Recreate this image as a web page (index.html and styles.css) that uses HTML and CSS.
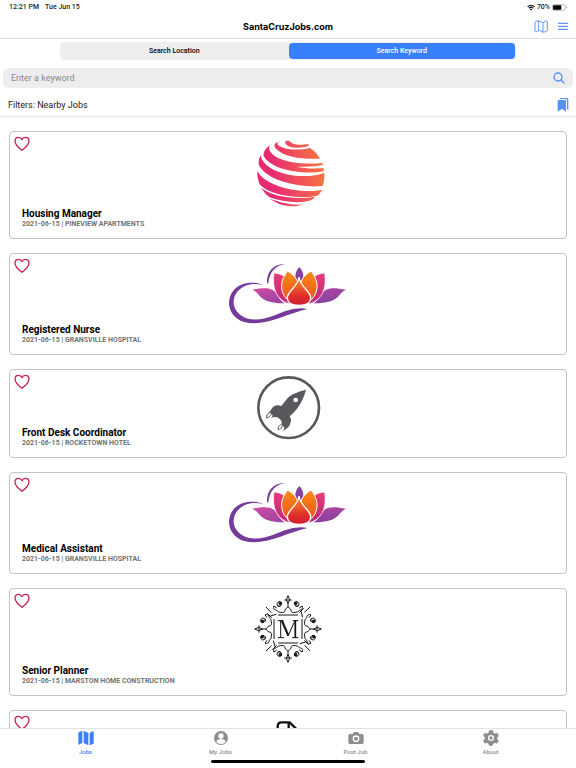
FILE: index.html
```html
<!DOCTYPE html>
<html lang="en">
<head>
<meta charset="utf-8">
<meta name="viewport" content="width=device-width, initial-scale=1">
<title>SantaCruzJobs.com</title>
<link rel="stylesheet" href="styles.css">
</head>
<body>
<svg class="defs" aria-hidden="true">
  <defs>
    <linearGradient id="globeFill" gradientUnits="userSpaceOnUse" x1="52" y1="145" x2="254" y2="110">
      <stop offset="0.2" stop-color="#e62a74"/><stop offset="1" stop-color="#f8763f"/>
    </linearGradient>
    <linearGradient id="leaf" x1="0" y1="0" x2="1" y2="1">
      <stop offset="0" stop-color="#cf4aa6"/><stop offset="1" stop-color="#7d3f9c"/>
    </linearGradient>
    <linearGradient id="pink" x1="0" y1="0" x2="0" y2="1">
      <stop offset="0" stop-color="#ea3a78"/><stop offset="1" stop-color="#bb2a78"/>
    </linearGradient>
    <linearGradient id="orange" x1="0" y1="0" x2="0" y2="1">
      <stop offset="0" stop-color="#fb8c10"/><stop offset="1" stop-color="#ee4b25"/>
    </linearGradient>
    <linearGradient id="core" x1="0" y1="0" x2="0" y2="1">
      <stop offset="0" stop-color="#f9902a"/><stop offset="0.7" stop-color="#df2b2c"/><stop offset="1" stop-color="#cf2034"/>
    </linearGradient>
    <symbol id="heart" viewBox="0 0 48 48">
      <path d="M24 43C12 34 3 26 3 15 3 8 8 4 14 4c4 0 8 2 10 7 2-5 6-7 10-7 6 0 11 4 11 11 0 11-9 19-21 28z" fill="none" stroke="#c0274e" stroke-width="4" stroke-linejoin="round"/>
    </symbol>
    <symbol id="lotus" viewBox="18 21 372 189">
      <path d="M130 91C104 77 62 81 42 104c-28 32-16 83 30 97 60 16 120-22 190-39-28-7-62 4-94 17-38 16-76 21-101 5-30-19-34-52-13-76 18-20 48-26 76-17z" fill="#763b9a"/>
      <path d="M142 86c-5-31 18-63 54-58-28 1-48 23-51 57z" fill="#763b9a"/>
      <path d="M97 104c34-6 60-9 73 13 8 14 14 22 25 28-33 1-63-5-78-24-6-8-12-13-20-17zM378 104c-34-6-60-9-73 13-8 14-14 22-25 28 33 1 63-5 78-24 6-8 12-13 20-17z" fill="url(#leaf)"/>
      <path d="M238 36c11 11 15 26 9 42h-18c-6-16-2-31 9-42z" fill="#8542a0"/>
      <g fill="url(#pink)" stroke="#fff" stroke-width="2">
        <path d="M162 54c24 2 40 13 44 34l4 59c-38-10-55-43-48-93zM314 54c-24 2-40 13-44 34l-4 59c38-10 55-43 48-93z"/>
      </g>
      <g fill="url(#orange)" stroke="#fff" stroke-width="3">
        <path d="M202 48c26 14 37 35 34 60l-5 41c-34-9-48-34-46-61 1-15 9-27 17-40zM274 48c-26 14-37 35-34 60l5 41c34-9 48-34 46-61-1-15-9-27-17-40z"/>
      </g>
      <path d="M237 66c3 30 35 42 35 62 0 15-15 23-35 23s-35-8-35-23c0-20 32-32 35-62z" fill="url(#core)" stroke="#fff" stroke-width="4"/>
    </symbol>
  </defs>
</svg>

<header class="top">
  <div class="status">
    <span class="status-group"><span>12:21 PM</span><span>Tue Jun 15</span></span>
    <span class="status-group tight">
      <svg width="8" height="7" viewBox="0 0 24 20" aria-hidden="true"><path d="M2 8c6-6 14-6 20 0M6 12c4-4 8-4 12 0" fill="none" stroke="#111" stroke-width="4"/><path d="M12 19l-4-4c2-2 6-2 8 0z" fill="#111"/></svg>
      <span>70%</span>
      <svg width="15" height="7" viewBox="0 0 45 21" aria-hidden="true"><rect x="1" y="2" width="39" height="17" rx="5" fill="#fff" stroke="#999" stroke-width="2"/><rect x="3" y="4" width="25" height="13" rx="3" fill="#000"/><path d="M42 7c3 1 3 6 0 7z" fill="#999"/></svg>
    </span>
  </div>
  <div class="titlebar">
    <h1>SantaCruzJobs.com</h1>
    <div class="actions">
      <button class="icon" aria-label="Map"><svg width="14" height="13" viewBox="0 0 42 39" fill="none" stroke="#6099fb" stroke-width="3" stroke-linejoin="round"><path d="M3 8c0-2 1-3 3-4l7-2 14 6 9-5c2-1 4 0 4 2v25c0 2-1 3-3 4l-8 3-13-6-9 4c-2 1-4 0-4-2zM14 3v27M27 9v27"/></svg></button>
      <button class="icon" aria-label="Menu"><svg width="10" height="9" viewBox="0 0 30 27" stroke="#6099fb" stroke-width="4"><path d="M0 4h30M0 13h30M0 22h30"/></svg></button>
    </div>
  </div>
</header>

<section class="search" aria-label="Search">
  <div class="segment">
    <button>Search Location</button>
    <button class="on">Search Keyword</button>
  </div>
  <div class="field">
    <input type="text" placeholder="Enter a keyword" aria-label="Keyword">
    <button class="icon" aria-label="Search"><svg width="12" height="12" viewBox="0 0 36 36" fill="none" stroke="#5592fb" stroke-width="4" stroke-linecap="round"><circle cx="15" cy="15" r="12"/><path d="M24 24l9 9"/></svg></button>
  </div>
  <div class="filters">
    <span>Filters: Nearby Jobs</span>
    <button class="icon" aria-label="Saved jobs"><svg width="12" height="14" viewBox="0 0 36 42" fill="#5592fb"><path d="M2 9c0-2 1-3 3-3h19c2 0 3 1 3 3v32l-12-9-13 9z"/><path d="M8 3c0-2 2-3 4-3h17c3 0 5 2 5 5v31l-4-3V9c0-4-2-6-6-6z"/></svg></button>
  </div>
</section>

<main class="jobs">
  <article class="card">
    <button class="like" aria-label="Save Housing Manager"><svg width="16" height="16"><use href="#heart"/></svg></button>
    <div class="art tall">
      <svg width="74" height="70" viewBox="33 24 222 210" aria-hidden="true">
        <g fill="url(#globeFill)">
          <path d="M137 33c-6 12 12 20 32 20 14 0 28-2 34-4 4-2 4-4 1-7-18 4-45 4-57-10z"/>
          <path d="M122 33c-16 4-24 12-14 23 24 25 76 32 132 30-5-11-15-22-30-32-34 8-79 6-95-8-5-5-3-10 7-13z"/>
          <path d="M90 46C76 56 69 67 71 78c16 30 65 44 109 48 28 3 50 2 71-2v-10c-22 2-56 2-82-4 27 0 56 0 80-5l-2-6c-60 6-131-3-153-30-7-8-9-15-4-23z"/>
          <path d="M62 76c-6 9-7 21-5 30 18 34 68 52 123 60 26 4 48 4 68 2 4-12 6-26 5-40-22 10-58 12-88 9-50-5-98-28-103-61z"/>
          <path d="M52 122c-1 16 2 32 9 44 26 24 74 34 121 35 24 1 42-1 53-5l12-17c-62 14-175-10-195-57z"/>
          <path d="M64 174c7 12 15 21 25 28 36 13 90 20 124 9l14-11c-62 10-130 0-163-26z"/>
          <path d="M88 205c28 22 68 31 102 18-33 4-70-4-102-18z"/>
        </g>
      </svg>
    </div>
    <h2>Housing Manager</h2>
    <p>2021-06-15 | PINEVIEW APARTMENTS</p>
  </article>

  <article class="card">
    <button class="like" aria-label="Save Registered Nurse"><svg width="16" height="16"><use href="#heart"/></svg></button>
    <div class="art medium"><svg class="drop" width="124" height="63" aria-hidden="true"><use href="#lotus"/></svg></div>
    <h2>Registered Nurse</h2>
    <p>2021-06-15 | GRANSVILLE HOSPITAL</p>
  </article>

  <article class="card">
    <button class="like" aria-label="Save Front Desk Coordinator"><svg width="16" height="16"><use href="#heart"/></svg></button>
    <div class="art short">
      <svg width="68" height="66" viewBox="27 20 204 198" aria-hidden="true">
        <circle cx="131" cy="115" r="91" fill="#fff" stroke="#58595d" stroke-width="8"/>
        <path d="M183 61c-22 5-45 14-55 25l-19 24c-14-5-25 0-32 13l-14 18c6-4 13-7 18-6l2 5-5 6c8-4 17-4 22-1l8 8c3 6 3 14-2 22l6-5 5 2c2 5 0 10-5 14 14-7 24-17 24-25 4-7 2-15-2-20 22-18 40-45 49-80z" fill="#58595d"/>
        <circle cx="152" cy="92" r="7" fill="#fff"/>
        <path d="M76 130c-8 1-11 8-12 16 7-1 13-5 15-12M108 166c-7 2-9 8-9 15 7-1 12-6 13-13" fill="#fff" stroke="#58595d" stroke-width="3"/>
      </svg>
    </div>
    <h2>Front Desk Coordinator</h2>
    <p>2021-06-15 | ROCKETOWN HOTEL</p>
  </article>

  <article class="card">
    <button class="like" aria-label="Save Medical Assistant"><svg width="16" height="16"><use href="#heart"/></svg></button>
    <div class="art medium"><svg class="drop" width="124" height="63" aria-hidden="true"><use href="#lotus"/></svg></div>
    <h2>Medical Assistant</h2>
    <p>2021-06-15 | GRANSVILLE HOSPITAL</p>
  </article>

  <article class="card">
    <button class="like" aria-label="Save Senior Planner"><svg width="16" height="16"><use href="#heart"/></svg></button>
    <div class="art tall">
      <svg width="68" height="68" viewBox="27 18 204 204" aria-hidden="true" fill="none" stroke="#151515" stroke-width="3">
        <defs>
          <g id="side">
            <path d="M99 78h60M129 20l-5 12 5 12 5-12zM118 33h22M129 44v8c0 6-9 5-9 12 0 7-6 7-14 6-8 0-11-8-15-7-4 0-6-6-5-12M129 52c0 6 9 5 9 12 0 7 6 7 14 6 8 0 11-8 15-7 4 0 6-6 5-12M95 57l-8-6M163 57l8-6"/>
            <path d="M107 51a7 7 0 1 1 2-10c3 8-5 13-12 9M151 51a7 7 0 1 0-2-10c-3 8 5 13 12 9"/>
            <circle cx="106" cy="43" r="4" fill="#151515"/><circle cx="152" cy="43" r="4" fill="#151515"/>
            <path d="M63 54l16 17M76 81l18-5M67 73l13 13"/>
          </g>
        </defs>
        <use href="#side"/>
        <use href="#side" transform="rotate(90 129 120)"/>
        <use href="#side" transform="rotate(180 129 120)"/>
        <use href="#side" transform="rotate(270 129 120)"/>
        <path d="M98 95h17M143 95h17M98 146h19M141 146h19M107 95v51M151 95v51" stroke-width="3"/>
        <path d="M109 95l20 46 21-46" stroke-width="3"/><path d="M111 95l19 44" stroke-width="6"/><path d="M151 95v51" stroke-width="5"/>
      </svg>
    </div>
    <h2>Senior Planner</h2>
    <p>2021-06-15 | MARSTON HOME CONSTRUCTION</p>
  </article>

  <article class="card">
    <button class="like" aria-label="Save job"><svg width="16" height="16"><use href="#heart"/></svg></button>
    <div class="art tall">
      <svg class="drop" width="24" height="60" viewBox="0 0 72 180" aria-hidden="true" fill="none" stroke="#111" stroke-width="7" stroke-linejoin="round"><path d="M5 170V22c0-8 4-12 12-12h24l20 20v140zM38 10v24h23"/></svg>
    </div>
  </article>
</main>

<nav class="tabs" aria-label="Main">
  <a class="on" href="#jobs"><svg width="16" height="16" viewBox="0 0 48 48" fill="currentColor"><path d="M1 10c0-2 1-3 3-4l9-4v36L3 44c-1 0-2 0-2-2zM17 2l14 7v37l-14-7zM35 9l9-5c2-1 3 0 3 2v32c0 2-1 3-2 4l-10 4z"/></svg><span>Jobs</span></a>
  <a href="#my-jobs"><svg width="16" height="16" viewBox="0 0 48 48"><circle cx="24" cy="24" r="21" fill="currentColor"/><circle cx="24" cy="18" r="8" fill="#fff"/><path d="M10 35c2-11 26-11 28 0-7 9-21 9-28 0z" fill="#fff"/></svg><span>My Jobs</span></a>
  <a href="#post-job"><svg width="16" height="16" viewBox="0 0 48 48"><path d="M6 12h8l4-6h12l4 6h8c3 0 5 2 5 5v20c0 3-2 5-5 5H6c-3 0-5-2-5-5V17c0-3 2-5 5-5z" fill="currentColor"/><circle cx="24" cy="26" r="8" fill="none" stroke="#fff" stroke-width="4"/></svg><span>Post Job</span></a>
  <a href="#about"><svg width="16" height="16" viewBox="0 0 48 48"><path d="M19 1h10l2 7 5 3 7-2 4 9-5 5v4l5 5-5 8-7-2-5 3-2 6H19l-2-6-5-3-7 2-4-9 5-5v-4l-5-5 4-8 7 2 5-3z" fill="currentColor" stroke="currentColor" stroke-linejoin="round"/><circle cx="24" cy="24" r="7" fill="none" stroke="#fff" stroke-width="4"/></svg><span>About</span></a>
  <div class="home-bar"></div>
</nav>
</body>
</html>
```

FILE: styles.css
```css
* {
  box-sizing: border-box;
}

body {
  margin: 0;
  height: 100vh;
  display: flex;
  flex-direction: column;
  overflow: hidden;
  background: #fff;
  color: #000;
  font-family: Roboto, "Liberation Sans", sans-serif;
}

svg {
  display: block;
}

button {
  padding: 0;
  border: 0;
  background: none;
  font: inherit;
  color: inherit;
}

.defs {
  position: absolute;
  width: 0;
  height: 0;
}

.top {
  flex: none;
  border-bottom: 1px solid #dcdcdc;
}

.status,
.status-group,
.titlebar,
.actions,
.filters,
.field {
  display: flex;
  align-items: center;
}

.status {
  justify-content: space-between;
  height: 14px;
  padding: 0 9px;
  font-size: 7px;
  font-weight: 500;
  color: #222;
}

.status-group {
  gap: 6px;
}

.tight {
  gap: 2px;
}

.titlebar {
  position: relative;
  justify-content: center;
  height: 24px;
}

h1 {
  margin: 0;
  font-family: Inter, Roboto, sans-serif;
  font-size: 9px;
  font-weight: 700;
}

.actions {
  position: absolute;
  right: 8px;
  gap: 10px;
}

.search {
  flex: none;
  border-bottom: 1px solid #e2e2e2;
}

.segment {
  display: grid;
  grid-template-columns: 1fr 1fr;
  width: 79%;
  height: 18px;
  margin: 3px auto 8px;
  border-radius: 4px;
  background: #eee;
  font-size: 7px;
  font-weight: 500;
}

.segment .on {
  margin: 1px;
  border-radius: 4px;
  background: #3880ff;
  color: #fff;
}

.field {
  height: 20px;
  margin: 0 3px;
  padding: 0 8px;
  border-radius: 6px;
  background: #ededed;
}

.field input {
  flex: 1;
  min-width: 0;
  padding: 0;
  border: 0;
  background: none;
  font: inherit;
  font-size: 9px;
}

.field input::placeholder {
  color: #888;
}

.filters {
  justify-content: space-between;
  height: 28px;
  padding: 6px 7px 0 8px;
  font-size: 9px;
  color: #222;
}

.jobs {
  flex: 1;
  min-height: 0;
  display: flex;
  flex-direction: column;
  gap: 14px;
  padding: 14px 9px 0;
  overflow: hidden;
}

.card {
  position: relative;
  flex: none;
  padding: 6px 12px 10px;
  border: 1px solid #c4c4c4;
  border-radius: 4px;
}

.like {
  position: absolute;
  top: 4px;
  left: 4px;
}

.art {
  display: flex;
  justify-content: center;
}

.tall {
  height: 69px;
}

.medium {
  height: 63px;
}

.short {
  height: 50px;
}

.drop {
  margin-top: 2px;
}

h2 {
  margin: 0;
  font-size: 10px;
  line-height: 13px;
  font-weight: 700;
}

.card p {
  margin: 0;
  font-size: 7px;
  line-height: 8px;
  font-weight: 700;
  color: #737373;
}

.tabs {
  position: relative;
  flex: none;
  display: grid;
  grid-template-columns: repeat(4, 1fr);
  padding: 0 18px;
  height: 40px;
  border-top: 1px solid #e2e2e2;
  background: #fff;
}

.tabs a {
  display: flex;
  flex-direction: column;
  align-items: center;
  padding-top: 1px;
  gap: 2px;
  font-size: 6px;
  line-height: 7px;
  font-weight: 500;
  color: #8e8e8e;
  text-decoration: none;
}

.tabs .on {
  color: #3880ff;
}

.home-bar {
  position: absolute;
  left: 50%;
  bottom: 5px;
  width: 154px;
  height: 3px;
  margin-left: -77px;
  border-radius: 2px;
  background: #000;
}
```
